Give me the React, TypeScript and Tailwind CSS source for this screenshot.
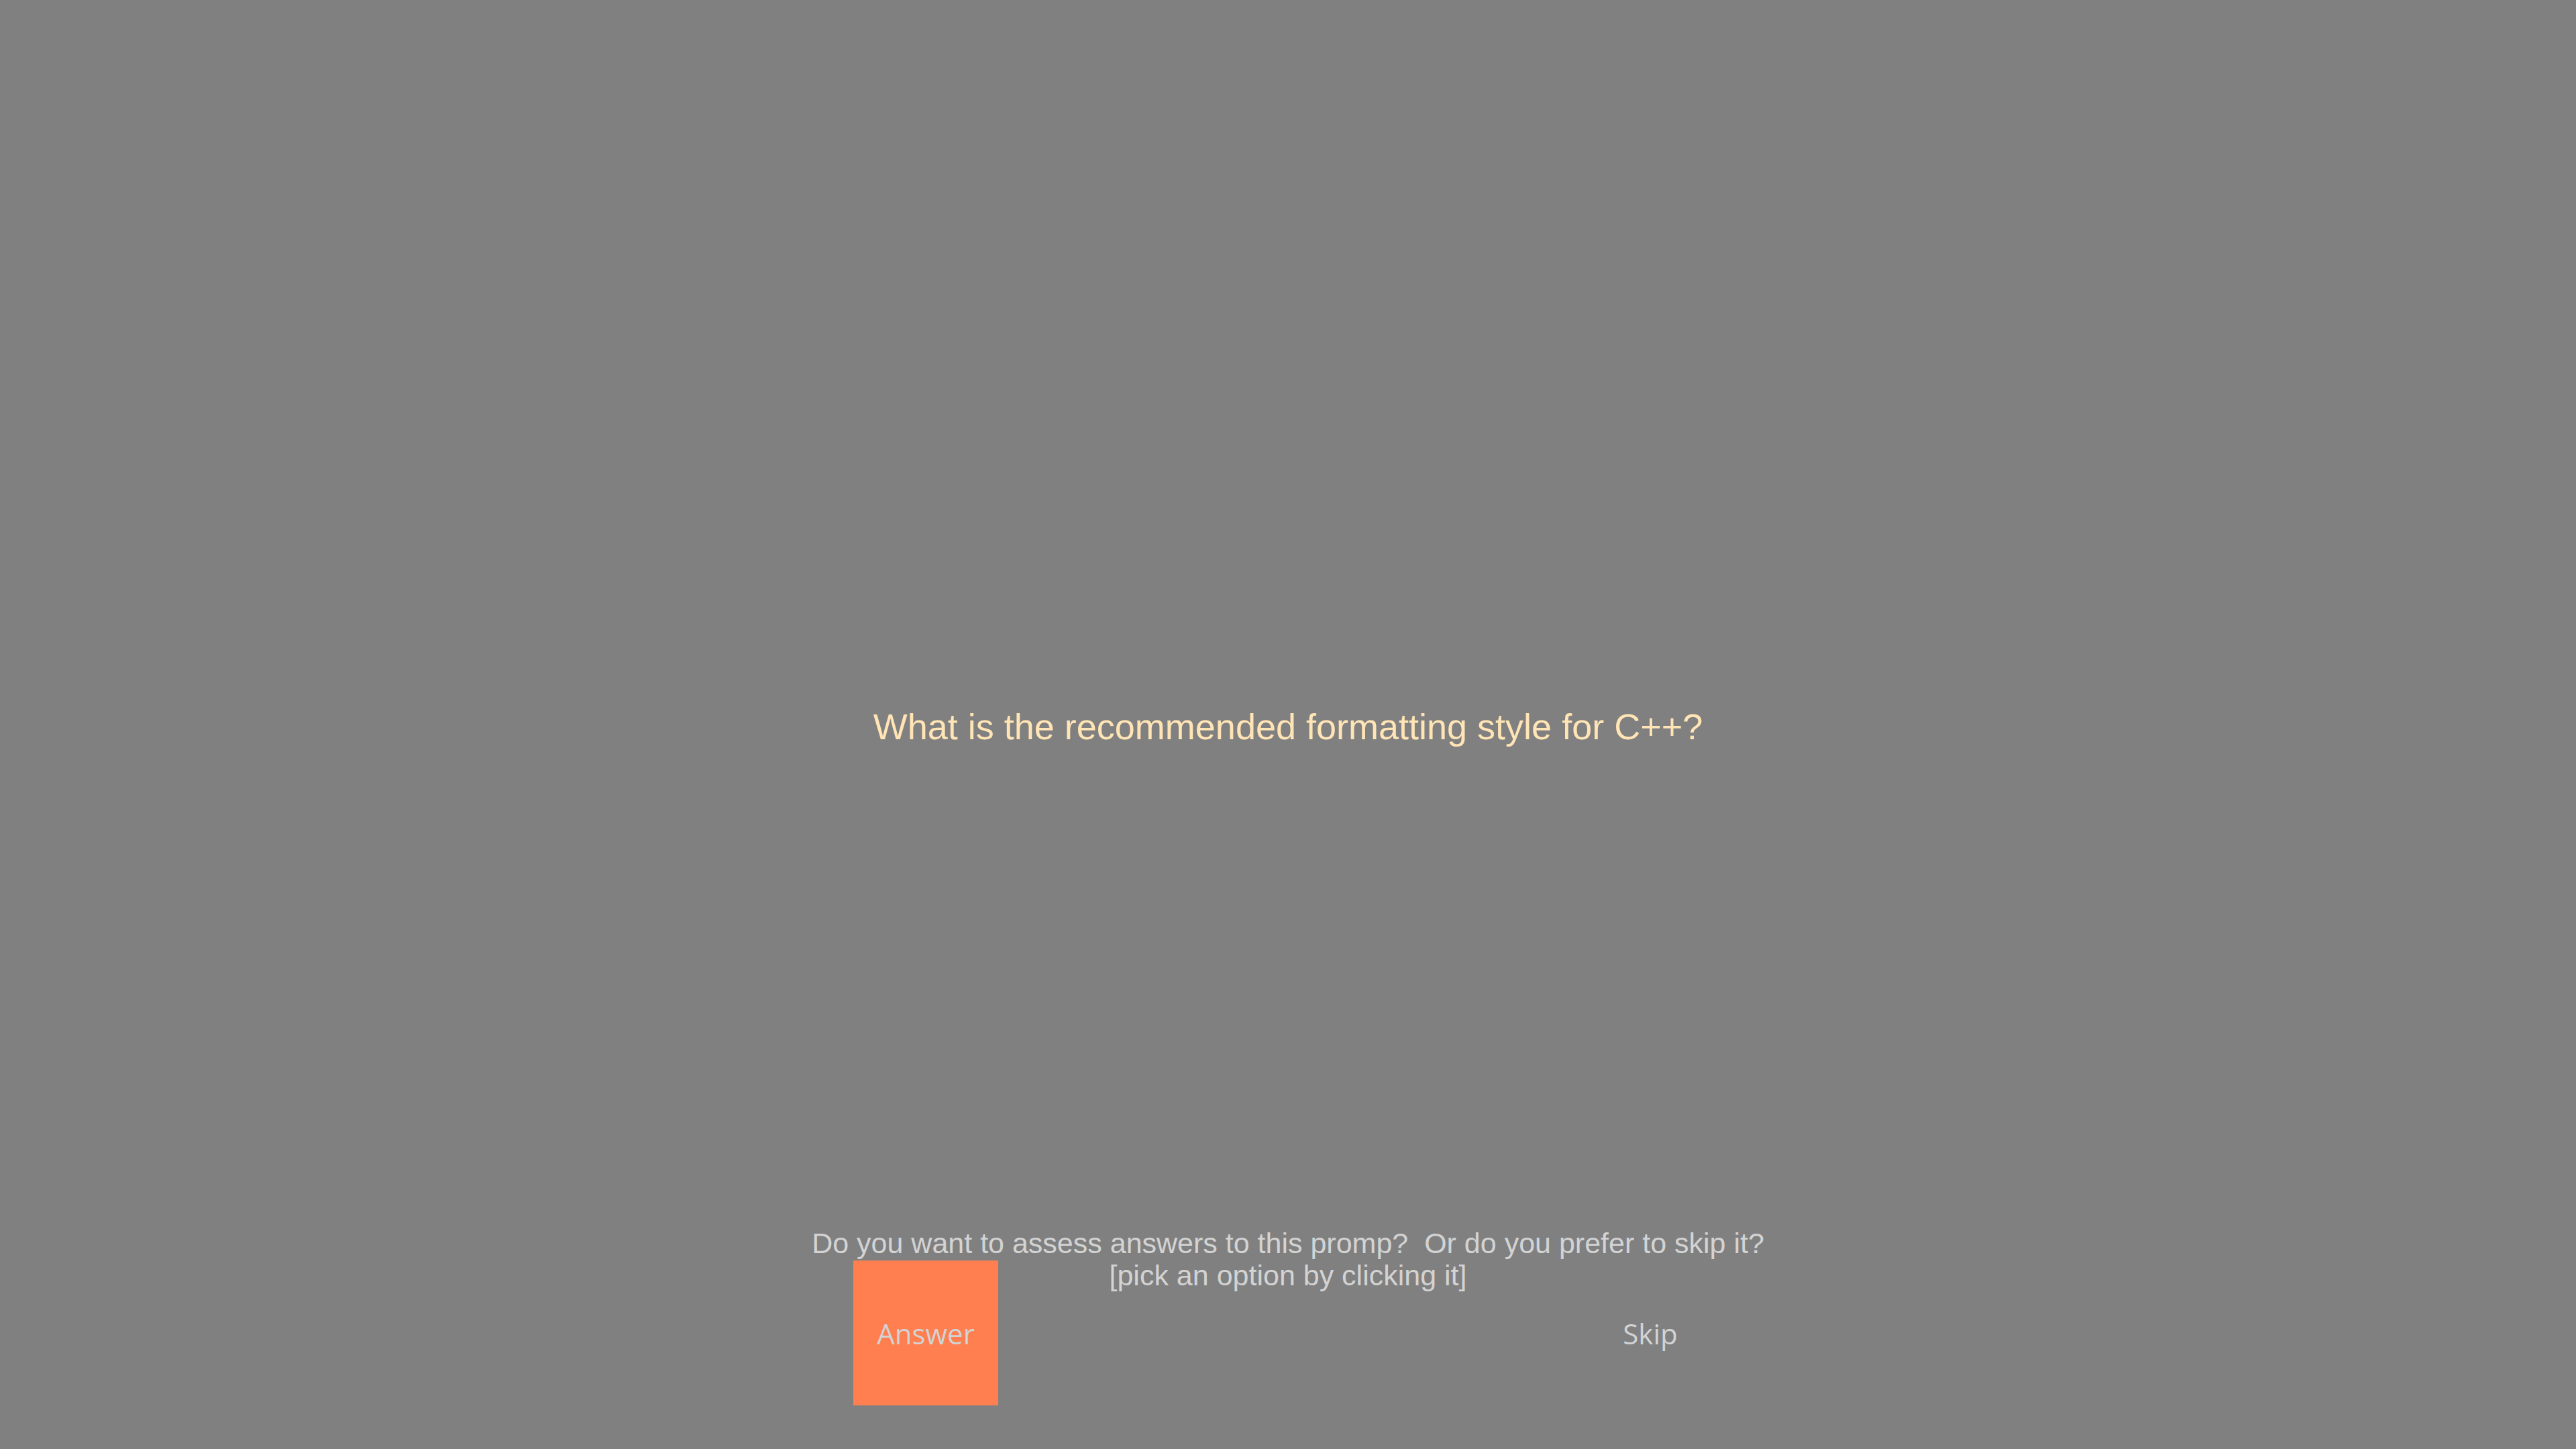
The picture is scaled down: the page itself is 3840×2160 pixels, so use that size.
import React from 'react';

const sans = "font-['Liberation_Sans',Arial,sans-serif]";
const open = "font-['Open_Sans','Noto_Sans',sans-serif]";

export default function App() {
  return (
    <div className="w-full h-[2160px] bg-[#808080] flex flex-col items-center overflow-hidden">
      {/* Prompt */}
      <h1 className={`${sans} mt-[1043px] text-[54px] font-normal text-[#ffe4b5]`}>
        What is the recommended formatting style for C++?
      </h1>

      {/* Choice */}
      <div className="mt-[705px] flex flex-col items-center">
        <p className={`${sans} text-[43px] leading-[48px] text-[#d3d3d3] text-center whitespace-pre`}>
          {'Do you want to assess answers to this promp?  Or do you prefer to skip it?'}
          <br />
          [pick an option by clicking it]
        </p>
        <div className="-mt-[46px] w-[1296px] flex justify-between">
          <button className={`${open} w-[216px] h-[216px] bg-[#ff7f50] text-[42px] text-[#d3d3d3]`}>
            Answer
          </button>
          <button className={`${open} w-[216px] h-[216px] bg-transparent text-[42px] text-[#d3d3d3]`}>
            Skip
          </button>
        </div>
      </div>
    </div>
  );
}
